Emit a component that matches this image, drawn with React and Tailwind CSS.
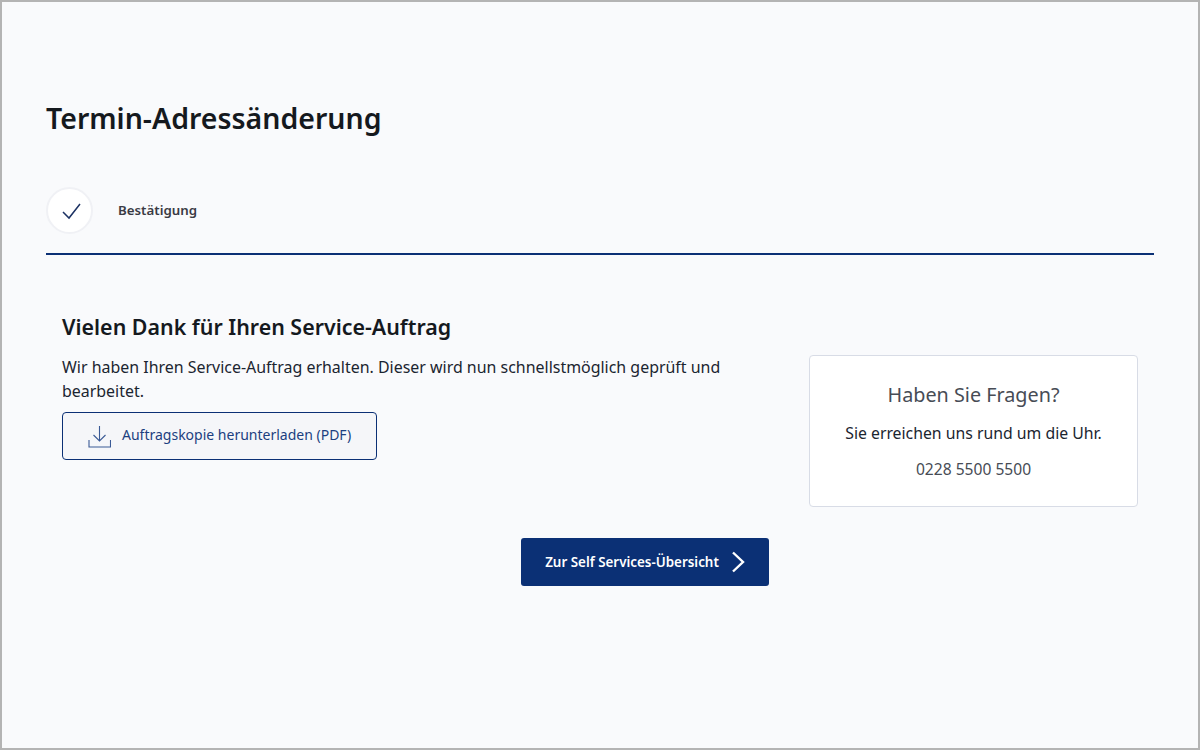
export default function App() {
  return (
    <div className="h-[750px] border-2 border-[#b4b4b4] bg-[#f9fafc] px-11 pt-[97px] font-['Noto_Sans',sans-serif] text-[#15191e]">
      <h1 className="text-[28.5px] leading-[38px] font-semibold">Termin-Adressänderung</h1>

      <div className="mt-[50px] flex items-center border-b-2 border-[#0b3075] pb-[19px]">
        <div className="flex h-[47px] w-[47px] items-center justify-center rounded-full border-2 border-[#f0f1f5] bg-white">
          <svg width="22" height="18" viewBox="0 0 22 18" fill="none">
            <path d="M4 10L10 16L21 2" stroke="#1c3263" strokeWidth="1.5" />
          </svg>
        </div>
        <span className="ml-[25px] text-[13.3px] font-semibold text-[#3a3a44]">Bestätigung</span>
      </div>

      <div className="flex justify-between px-4 pt-[58px]">
        <div className="w-[680px]">
          <h2 className="text-[21.4px] leading-[28px] font-semibold">Vielen Dank für Ihren Service-Auftrag</h2>
          <p className="mt-[14px] text-[15.95px] leading-[24px] text-[#1b2530]">
            Wir haben Ihren Service-Auftrag erhalten. Dieser wird nun schnellstmöglich geprüft und bearbeitet.
          </p>
          <button className="mt-[9px] flex h-[48px] w-[315px] items-center rounded border border-[#0b3075] bg-[#f5f6f9] pl-[25px] text-[14px] text-[#1c3f80]">
            <svg width="23" height="23" viewBox="0 0 23 23" fill="none" stroke="#3a5a96" strokeWidth="1.1">
              <path d="M11.5 1V16M5.5 10L11.5 16L17.5 10" />
              <path d="M1 15V22H22.5V15" />
            </svg>
            <span className="ml-[11px] mb-[3px]">Auftragskopie herunterladen (PDF)</span>
          </button>
        </div>

        <div className="mt-[42px] flex h-[152px] w-[329px] flex-col items-center rounded border border-[#d8dce6] bg-white pt-[25px]">
          <h3 className="text-[19.8px] leading-[28px] text-[#474c55]">Haben Sie Fragen?</h3>
          <p className="mt-[14px] text-[15.8px] leading-[20px] text-[#1b2530]">Sie erreichen uns rund um die Uhr.</p>
          <p className="mt-[16px] text-[15.6px] leading-[20px] text-[#474c55]">0228 5500 5500</p>
        </div>
      </div>

      <div className="ml-[475px] mt-[31px] flex">
        <button className="flex h-[48px] w-[248px] items-center justify-center rounded-[3px] bg-[#0b3075] text-[13.4px] font-semibold text-white">
          Zur Self Services-Übersicht
          <svg className="ml-[12px]" width="14" height="22" viewBox="0 0 14 22" fill="none">
            <path d="M2 1.5L12 11L2 20.5" stroke="white" strokeWidth="2.4" />
          </svg>
        </button>
      </div>
    </div>
  );
}
